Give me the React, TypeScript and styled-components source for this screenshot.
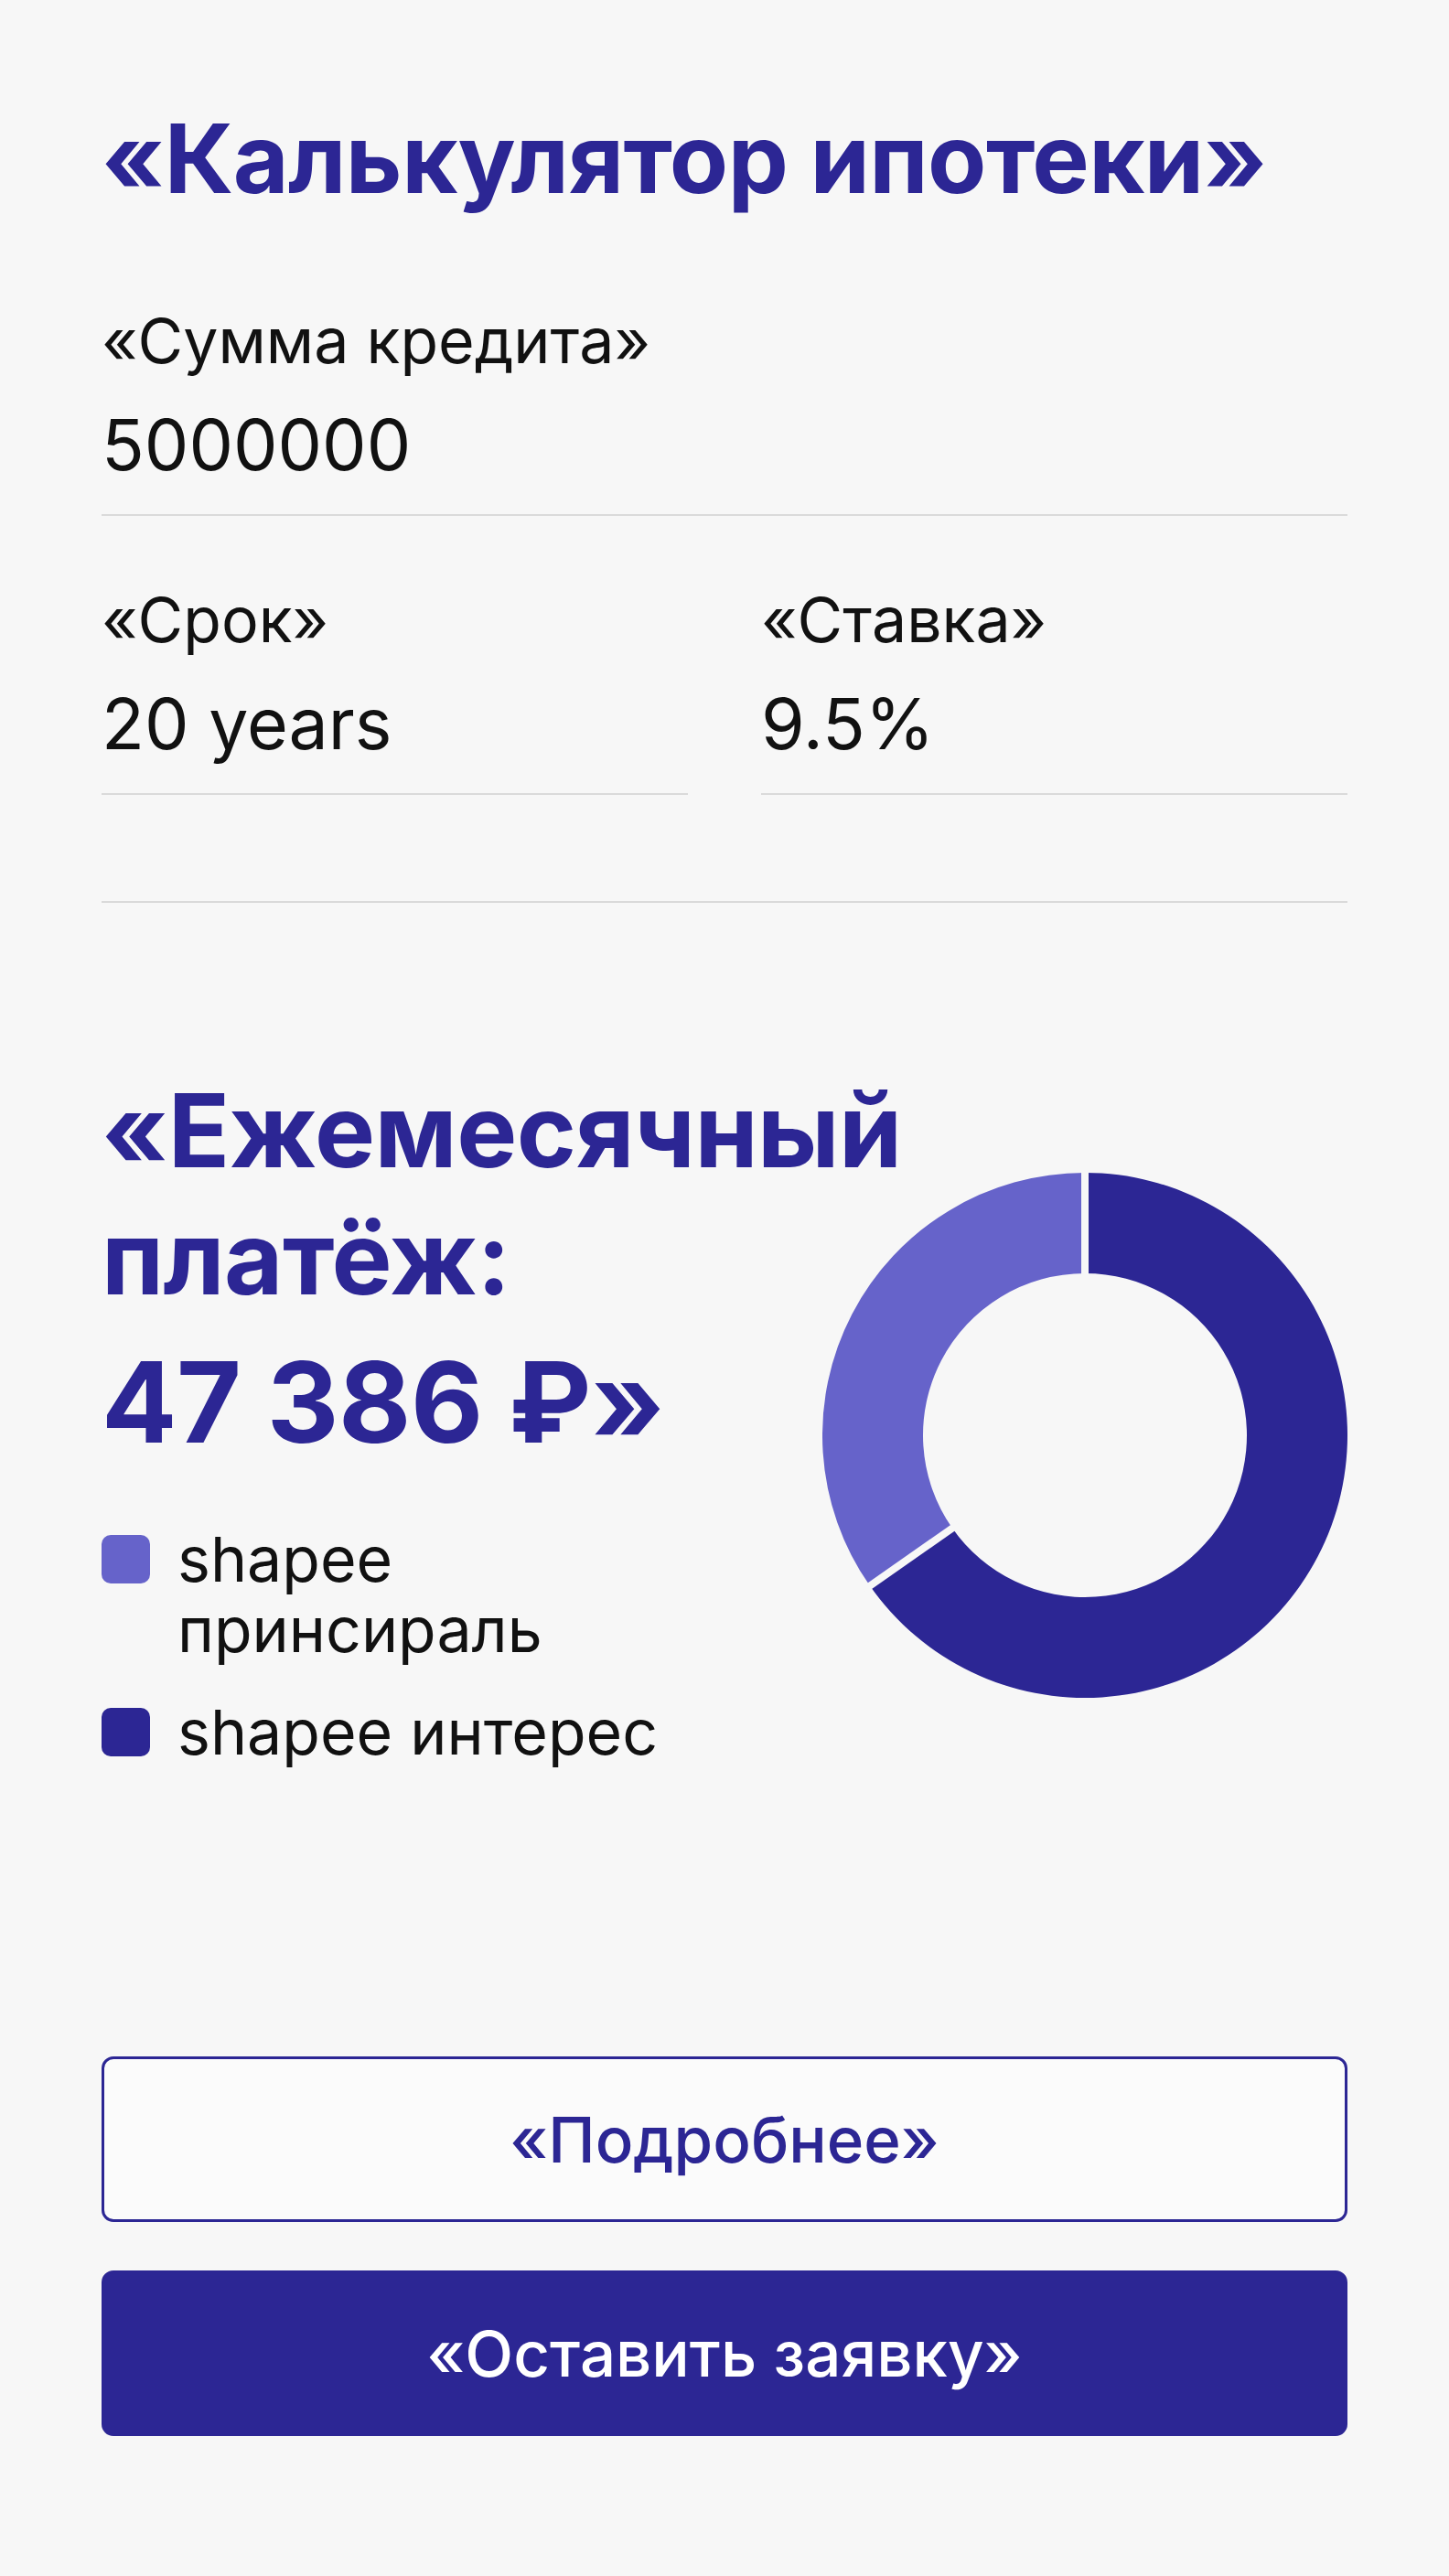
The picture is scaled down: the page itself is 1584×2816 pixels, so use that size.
import React from "react";
import styled, { createGlobalStyle } from "styled-components";

const BG = "#f7f7f7";
const INDIGO = "#2c2694";
const LIGHT = "#6663ca";
const INK = "#111111";
const RULE = "#dadada";

const Global = createGlobalStyle`
  html, body { margin: 0; padding: 0; background: ${BG}; }
  body { font-family: Inter, "Noto Sans", "Liberation Sans", sans-serif; color: ${INK}; }
  * { box-sizing: border-box; }
`;

const Page = styled.main`
  width: 1584px;
  min-height: 2816px;
  padding: 109px 111px 151px;
  display: flex;
  flex-direction: column;
`;

const Title = styled.h1`
  margin: 0;
  font-size: 105px;
  line-height: 127px;
  font-weight: 700;
  color: ${INDIGO};
  letter-spacing: -0.6px;
`;

const Form = styled.section`
  margin-top: 96px;
  display: flex;
  flex-direction: column;
  gap: 73px;
`;

const Row = styled.div`
  display: grid;
  grid-template-columns: 1fr 1fr;
  column-gap: 80px;
`;

const Field = styled.div`
  display: flex;
  flex-direction: column;
  padding-bottom: 30px;
  border-bottom: 2px solid ${RULE};
`;

const Label = styled.div`
  font-size: 68px;
  line-height: 1.2;
  font-weight: 400;
  color: ${INK};
`;

const Value = styled.div`
  margin-top: 26px;
  font-size: 77px;
  line-height: 1.2;
  font-weight: 400;
  color: ${INK};
`;

const Separator = styled.hr`
  margin: 116px 0 0;
  border: none;
  height: 2px;
  background: ${RULE};
`;

const Result = styled.section`
  margin-top: 179px;
  display: grid;
  grid-template-columns: minmax(0, 1fr) 574px;
  column-gap: 98px;
  align-items: start;
`;

const Summary = styled.div`
  display: flex;
  flex-direction: column;
`;

const Heading = styled.h2`
  margin: 0;
  font-size: 111px;
  line-height: 139px;
  font-weight: 700;
  color: ${INDIGO};
  white-space: nowrap;
  letter-spacing: -0.5px;
`;

const Amount = styled.div`
  margin-top: 16px;
  font-size: 122px;
  line-height: 1.2;
  font-weight: 700;
  color: ${INDIGO};
  letter-spacing: -0.5px;
`;

const Legend = styled.ul`
  list-style: none;
  margin: 60px 0 0;
  padding: 0;
  display: flex;
  flex-direction: column;
  gap: 35px;
`;

const LegendItem = styled.li`
  display: flex;
  align-items: flex-start;
  gap: 30px;
`;

const Swatch = styled.span<{ $color: string }>`
  flex: none;
  width: 53px;
  height: 53px;
  margin-top: 12px;
  border-radius: 10px;
  background: ${(p) => p.$color};
`;

const LegendText = styled.span`
  font-size: 68px;
  line-height: 77px;
  color: ${INK};
`;

const ChartBox = styled.div`
  margin-top: 116px;
  width: 574px;
  height: 574px;
`;

const Actions = styled.div`
  margin-top: 316px;
  display: flex;
  flex-direction: column;
  gap: 53px;
`;

const Button = styled.button<{ $primary?: boolean }>`
  height: 181px;
  width: 100%;
  border-radius: 13px;
  border: 3px solid ${INDIGO};
  background: ${(p) => (p.$primary ? INDIGO : "#fbfbfb")};
  color: ${(p) => (p.$primary ? "#ffffff" : INDIGO)};
  font-family: Inter, "Noto Sans", "Liberation Sans", sans-serif;
  font-size: 69px;
  font-weight: 500;
  display: flex;
  align-items: center;
  justify-content: center;
  cursor: pointer;
`;

function polar(cx: number, cy: number, r: number, deg: number) {
  const a = (deg * Math.PI) / 180;
  return [cx + r * Math.sin(a), cy - r * Math.cos(a)];
}

function sector(cx: number, cy: number, R: number, r: number, a0: number, a1: number) {
  const large = a1 - a0 > 180 ? 1 : 0;
  const [x0, y0] = polar(cx, cy, R, a0);
  const [x1, y1] = polar(cx, cy, R, a1);
  const [x2, y2] = polar(cx, cy, r, a1);
  const [x3, y3] = polar(cx, cy, r, a0);
  return `M${x0} ${y0} A${R} ${R} 0 ${large} 1 ${x1} ${y1} L${x2} ${y2} A${r} ${r} 0 ${large} 0 ${x3} ${y3} Z`;
}

function Donut({ interestShare }: { interestShare: number }) {
  const c = 287;
  const R = 287;
  const r = 177;
  const split = interestShare * 360;
  const [gx0, gy0] = polar(c, c, r - 8, split);
  const [gx1, gy1] = polar(c, c, R + 8, split);
  return (
    <svg width="574" height="574" viewBox="0 0 574 574">
      <path d={sector(c, c, R, r, 0, split)} fill={INDIGO} />
      <path d={sector(c, c, R, r, split, 359.999)} fill={LIGHT} />
      <line x1={c} y1={-4} x2={c} y2={R - r + 8} stroke={BG} strokeWidth={8} />
      <line x1={gx0} y1={gy0} x2={gx1} y2={gy1} stroke={BG} strokeWidth={8} />
    </svg>
  );
}

export default function App() {
  return (
    <>
      <Global />
      <Page>
        <Title>«Калькулятор ипотеки»</Title>
        <Form>
          <Field>
            <Label>«Сумма кредита»</Label>
            <Value>5000000</Value>
          </Field>
          <Row>
            <Field>
              <Label>«Срок»</Label>
              <Value>20 years</Value>
            </Field>
            <Field>
              <Label>«Ставка»</Label>
              <Value>9.5%</Value>
            </Field>
          </Row>
        </Form>
        <Separator />
        <Result>
          <Summary>
            <Heading>
              «Ежемесячный
              <br />
              платёж:
            </Heading>
            <Amount>47 386 ₽»</Amount>
            <Legend>
              <LegendItem>
                <Swatch $color={LIGHT} />
                <LegendText>shapee принсираль</LegendText>
              </LegendItem>
              <LegendItem>
                <Swatch $color={INDIGO} />
                <LegendText>shapee интерес</LegendText>
              </LegendItem>
            </Legend>
          </Summary>
          <ChartBox>
            <Donut interestShare={235 / 360} />
          </ChartBox>
        </Result>
        <Actions>
          <Button>«Подробнее»</Button>
          <Button $primary>«Оставить заявку»</Button>
        </Actions>
      </Page>
    </>
  );
}
